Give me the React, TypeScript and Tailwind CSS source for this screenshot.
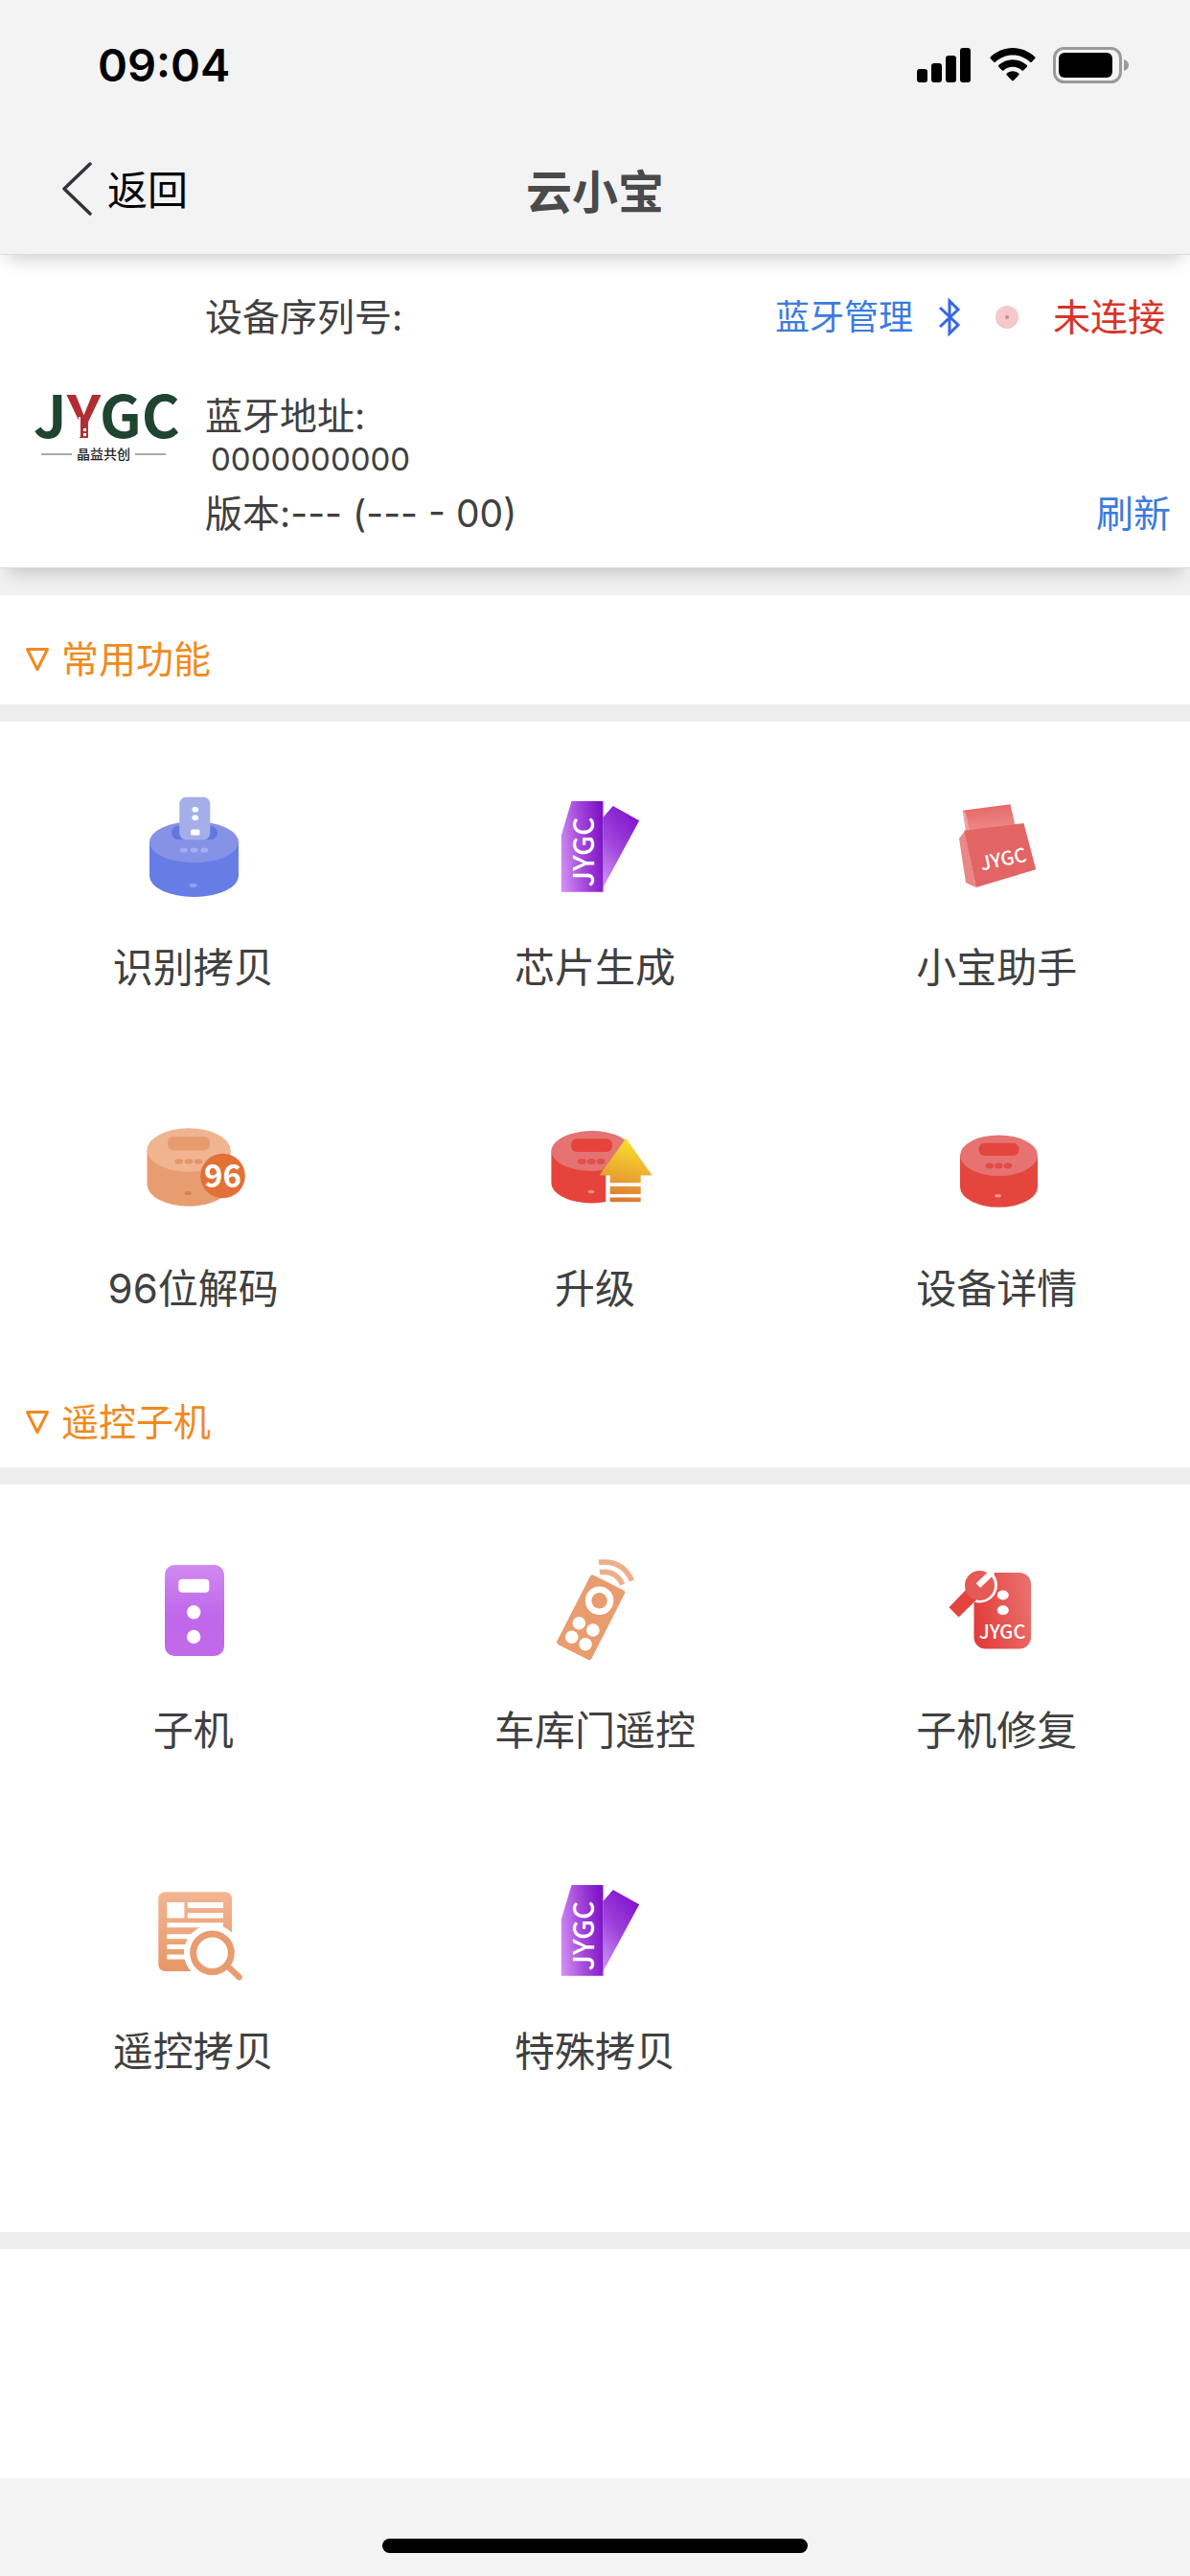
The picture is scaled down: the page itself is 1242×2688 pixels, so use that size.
import React from "react";

const MARK_FONT = '"Noto Sans CJK SC", "Noto Sans", sans-serif';

function SignalIcon() {
  return (
    <svg width="58" height="36" viewBox="0 0 58 36" aria-hidden="true">
      <rect x="0" y="22" width="11" height="14" rx="3" />
      <rect x="15" y="16" width="11" height="20" rx="3" />
      <rect x="30" y="8" width="11" height="28" rx="3" />
      <rect x="45" y="0" width="11" height="36" rx="3" />
    </svg>
  );
}

function WifiIcon() {
  return (
    <svg width="48" height="36" viewBox="0 0 48 36" aria-hidden="true">
      <path d="M24 0C33 0 41 3.600 47.300 9.400C47.800 9.900 47.800 10.500 47.300 11L43.700 14.700C43.200 15.200 42.600 15.200 42.100 14.700C37.200 10.200 30.900 7.500 24 7.500C17.100 7.500 10.800 10.200 5.900 14.700C5.400 15.200 4.800 15.200 4.300 14.700L0.700 11C0.200 10.500 0.200 9.900 0.700 9.400C7 3.600 15 0 24 0Z" />
      <path d="M24 12.300C29.700 12.300 34.900 14.500 38.800 18.100C39.300 18.600 39.300 19.200 38.800 19.700L35.100 23.400C34.700 23.800 34 23.800 33.500 23.400C31 21.200 27.700 19.800 24 19.800C20.300 19.800 17 21.200 14.500 23.400C14 23.800 13.300 23.800 12.900 23.400L9.200 19.700C8.700 19.200 8.700 18.600 9.200 18.100C13.100 14.500 18.300 12.300 24 12.300Z" />
      <path d="M24 24.300C26.500 24.300 28.700 25.200 30.400 26.700C30.900 27.200 30.900 27.800 30.400 28.300L24.900 33.900C24.400 34.400 23.600 34.400 23.100 33.900L17.600 28.300C17.100 27.800 17.100 27.200 17.600 26.700C19.300 25.200 21.500 24.300 24 24.300Z" />
    </svg>
  );
}

function BatteryIcon() {
  return (
    <svg width="80" height="38" viewBox="0 0 80 38" aria-hidden="true">
      <rect x="1.500" y="1.500" width="69" height="35" rx="10" fill="none" stroke="#9a9a9a" strokeWidth="3" />
      <rect x="6" y="6" width="56" height="26" rx="6" />
      <path d="M74 13C77 14 79 16.300 79 19C79 21.700 77 24 74 25Z" fill="#9a9a9a" />
    </svg>
  );
}

function BluetoothIcon() {
  return (
    <svg width="24" height="42" viewBox="0 0 24 42" fill="none" stroke="#3767e6" strokeWidth="3" strokeLinejoin="miter" aria-hidden="true">
      <path d="M2 11L21 29L12 38V4L21 13L2 31" />
    </svg>
  );
}

function BrandLogo() {
  return (
    <svg width="156" height="104" viewBox="0 0 156 104" role="img" aria-label="JYGC 晶益共创">
      <text x="1" y="75" fontFamily={MARK_FONT} fontWeight="700" fontSize="61" fill="#1f4430">
        J<tspan fill="#b02e31">Y</tspan>GC
      </text>
      <path d="M49 53V74" stroke="#ffffff" strokeWidth="2" />
      <path d="M53 65h3v3h-3zM53 70h3v3h-3z" fill="#ffffff" />
      <path d="M9 92H41M107 92H139" stroke="#555555" strokeWidth="1" />
      <text x="74" y="97" textAnchor="middle" fontFamily={MARK_FONT} fontWeight="500" fontSize="14" fill="#222222">
        晶益共创
      </text>
    </svg>
  );
}

function IconFrame({ children }: { children: React.ReactNode }) {
  return (
    <svg width="120" height="120" viewBox="0 0 120 120" aria-hidden="true">
      {children}
    </svg>
  );
}

function CopyIcon() {
  return (
    <IconFrame>
      <path d="M14 55V90A46.500 22 0 0 0 107 90V55Z" fill="#667de6" />
      <ellipse cx="60.500" cy="54.700" rx="46.500" ry="21.500" fill="#8592e6" />
      <rect x="37" y="38" width="48" height="14" rx="7" fill="#6277e0" />
      <rect x="45.300" y="7.700" width="32" height="44.500" rx="7" fill="#a4afea" />
      <rect x="58.500" y="18" width="6.500" height="5.500" rx="2.500" fill="#fff" />
      <rect x="58.500" y="26.500" width="6.500" height="5.500" rx="2.500" fill="#fff" />
      <rect x="57" y="41.500" width="9.500" height="6" rx="1.500" fill="#fff" />
      <g fill="#a3aef0">
        <ellipse cx="49.700" cy="63" rx="4" ry="2.600" />
        <ellipse cx="60.500" cy="63" rx="4" ry="2.600" />
        <ellipse cx="71.300" cy="63" rx="4" ry="2.600" />
      </g>
      <ellipse cx="59.500" cy="99.700" rx="4" ry="2" fill="#8fa1f2" />
    </IconFrame>
  );
}

function ChipIcon() {
  const id = React.useId();
  return (
    <IconFrame>
      <defs>
        <linearGradient id={id + "a"} x1="0" y1="0.700" x2="1" y2="0.500">
          <stop offset="0" stopColor="#cf8cf2" />
          <stop offset="0.500" stopColor="#a548da" />
          <stop offset="1" stopColor="#7f14c8" />
        </linearGradient>
        <linearGradient id={id + "b"} x1="0.600" y1="0" x2="0.100" y2="1">
          <stop offset="0" stopColor="#8216cc" />
          <stop offset="0.500" stopColor="#a044dc" />
          <stop offset="1" stopColor="#cf92f5" />
        </linearGradient>
      </defs>
      <polygon points="78.800,17 106.200,32.300 68.500,102 68.500,28.700" fill={"url(#" + id + "b)"} />
      <polygon points="35.500,12 68.500,12 68.500,106.700 24.800,106.700 24.800,47.700" fill={"url(#" + id + "a)"} />
      <text transform="translate(58.500 65) rotate(-90)" textAnchor="middle" fontFamily={MARK_FONT} fontWeight="500" fontSize="30" fill="#fff">
        JYGC
      </text>
    </IconFrame>
  );
}

function HelperIcon() {
  const id = React.useId();
  return (
    <IconFrame>
      <defs>
        <linearGradient id={id} x1="0" y1="0" x2="0.200" y2="1">
          <stop offset="0" stopColor="#e46262" />
          <stop offset="1" stopColor="#ee8a8a" />
        </linearGradient>
      </defs>
      <polygon points="24.800,21.700 74.500,15.300 79.500,37 29,44" fill={"url(#" + id + ")"} />
      <polygon points="24.800,21.700 28,24 32,43 28,44" fill="#f1a0a0" />
      <polygon points="21,51 27,43 38.800,102 28,97" fill="#ea8787" />
      <polygon points="26.500,42.700 88.500,35 101.200,83.300 38.800,102" fill="#e36464" />
      <text transform="translate(68.500 79.500) rotate(-12)" textAnchor="middle" fontFamily={MARK_FONT} fontWeight="500" fontSize="20" fill="#fff">
        JYGC
      </text>
    </IconFrame>
  );
}

function DecodeIcon() {
  return (
    <IconFrame>
      <path d="M11.500 41V77A43.500 22.800 0 0 0 98.500 77V41Z" fill="#e89d70" />
      <ellipse cx="55" cy="41" rx="43.500" ry="22.800" fill="#f0b491" />
      <rect x="33" y="27" width="44" height="14.500" rx="6" fill="#e79c70" />
      <g fill="#e5976a">
        <ellipse cx="44.700" cy="53" rx="4.400" ry="2.800" />
        <ellipse cx="55" cy="53" rx="4.400" ry="2.800" />
        <ellipse cx="65" cy="53" rx="4.400" ry="2.800" />
      </g>
      <ellipse cx="54.200" cy="86" rx="3.500" ry="2" fill="#d97f4f" />
      <circle cx="90.500" cy="68" r="23.300" fill="#e37036" />
      <text x="90.500" y="80" textAnchor="middle" fontFamily={MARK_FONT} fontWeight="700" fontSize="33" fill="#fff">
        96
      </text>
    </IconFrame>
  );
}

function UpgradeIcon() {
  const id = React.useId();
  return (
    <IconFrame>
      <defs>
        <linearGradient id={id} gradientUnits="userSpaceOnUse" x1="98" y1="30" x2="84" y2="96">
          <stop offset="0" stopColor="#f7e02c" />
          <stop offset="0.550" stopColor="#eaa931" />
          <stop offset="1" stopColor="#db7434" />
        </linearGradient>
      </defs>
      <path d="M14.400 42V75A42 21.300 0 0 0 71.500 95V42Z" fill="#e6443b" />
      <path d="M14.400 42A42 21 0 0 1 92 31L71.500 61.500A42 21 0 0 1 14.400 42Z" fill="#e47371" />
      <rect x="35" y="29.300" width="43" height="13.700" rx="6" fill="#e6443b" />
      <g fill="#e04f49">
        <ellipse cx="46.400" cy="53" rx="4.400" ry="2.900" />
        <ellipse cx="56.300" cy="53" rx="4.400" ry="2.900" />
        <ellipse cx="66.200" cy="53" rx="4.400" ry="2.900" />
      </g>
      <ellipse cx="56" cy="84.500" rx="3.500" ry="1.800" fill="#f08a80" />
      <path d="M71.500 67H112V98H71.500Z" fill="#fff" />
      <g fill={"url(#" + id + ")"}>
        <path d="M92.300 28.700L119.600 67.500H107.700V75.300H75.700V67.500H64.600Z" />
        <rect x="75.700" y="79" width="32" height="8" />
        <rect x="75.700" y="90.500" width="32" height="4.700" />
      </g>
    </IconFrame>
  );
}

function DeviceIcon() {
  return (
    <IconFrame>
      <path d="M22 46.700V79.500A40.500 21.300 0 0 0 103 79.500V46.700Z" fill="#e4463d" />
      <ellipse cx="62.500" cy="46.700" rx="40.500" ry="21.300" fill="#e67371" />
      <rect x="41.500" y="33.700" width="42" height="13.300" rx="6" fill="#e4463d" />
      <g fill="#e04c45">
        <ellipse cx="52.800" cy="57.500" rx="4.400" ry="2.900" />
        <ellipse cx="62.300" cy="57.500" rx="4.400" ry="2.900" />
        <ellipse cx="71.800" cy="57.500" rx="4.400" ry="2.900" />
      </g>
      <ellipse cx="61.500" cy="88.700" rx="3.500" ry="1.700" fill="#f3968c" />
    </IconFrame>
  );
}

function FobIcon() {
  const id = React.useId();
  return (
    <IconFrame>
      <defs>
        <linearGradient id={id} x1="0" y1="0" x2="0" y2="1">
          <stop offset="0" stopColor="#d08aef" />
          <stop offset="0.550" stopColor="#bf68eb" />
          <stop offset="1" stopColor="#c06ae8" />
        </linearGradient>
      </defs>
      <rect x="30" y="13" width="62" height="95" rx="10" fill={"url(#" + id + ")"} />
      <rect x="44.300" y="27.700" width="32" height="14" rx="4" fill="#fff" />
      <circle cx="60.200" cy="62.300" r="7.200" fill="#fff" />
      <circle cx="60.200" cy="88" r="7.200" fill="#fff" />
    </IconFrame>
  );
}

function GarageRemoteIcon() {
  return (
    <IconFrame>
      <rect x="35.500" y="27" width="40.400" height="81.400" rx="3" transform="rotate(27 55.700 67.700)" fill="#e99c6e" />
      <circle cx="64.600" cy="50.300" r="11.500" fill="none" stroke="#fff" strokeWidth="6.500" />
      <g fill="#fff">
        <circle cx="43.300" cy="73.700" r="6.800" />
        <circle cx="57.900" cy="81" r="6.800" />
        <circle cx="35.700" cy="88.300" r="6.800" />
        <circle cx="50" cy="95.700" r="6.800" />
      </g>
      <g fill="none" stroke="#eeae88" strokeWidth="5.500">
        <path d="M64 10.200Q89 7.500 98.500 29.500" />
        <path d="M65 20.500Q82 18 88.800 33.500" />
      </g>
    </IconFrame>
  );
}

function RepairIcon() {
  const id = React.useId();
  return (
    <IconFrame>
      <defs>
        <linearGradient id={id} x1="0" y1="0.600" x2="1" y2="0.300">
          <stop offset="0" stopColor="#e23d3b" />
          <stop offset="1" stopColor="#ea706c" />
        </linearGradient>
      </defs>
      <rect x="36.500" y="21" width="59.500" height="79.500" rx="12" fill={"url(#" + id + ")"} />
      <circle cx="42.500" cy="34" r="18.500" fill="#fff" />
      <path d="M28 39L10.500 57.300L20.500 67.500L39 49.500Z" fill="#e4433f" />
      <circle cx="42.500" cy="34.500" r="15.500" fill="#e55a57" />
      <path d="M41 34.500L56 20" stroke="#fff" strokeWidth="6.500" />
      <ellipse cx="66.800" cy="44.500" rx="6" ry="5" fill="#fff" />
      <ellipse cx="66.800" cy="60.300" rx="6" ry="5" fill="#fff" />
      <text x="66" y="90" textAnchor="middle" fontFamily={MARK_FONT} fontWeight="500" fontSize="20" fill="#fff">
        JYGC
      </text>
    </IconFrame>
  );
}

function SearchRecordIcon() {
  const id = React.useId();
  return (
    <IconFrame>
      <defs>
        <linearGradient id={id} x1="0" y1="0" x2="0" y2="1">
          <stop offset="0" stopColor="#f2b592" />
          <stop offset="1" stopColor="#e89767" />
        </linearGradient>
      </defs>
      <rect x="23.300" y="19.300" width="76.700" height="82.700" rx="7" fill={"url(#" + id + ")"} />
      <g fill="#fff">
        <rect x="32.400" y="30" width="18" height="16.500" />
        <rect x="53.800" y="30" width="37.200" height="6" />
        <rect x="53.800" y="41" width="37.200" height="5.500" />
        <rect x="32.400" y="51.300" width="58.600" height="5" />
        <rect x="32.400" y="63.200" width="30" height="5" />
        <rect x="32.400" y="74" width="20" height="5" />
        <rect x="32.400" y="84.500" width="20" height="5" />
        <circle cx="79.500" cy="82.700" r="29.500" />
      </g>
      <circle cx="79.500" cy="82.700" r="19.800" fill="none" stroke="#e99c6f" strokeWidth="7" />
      <path d="M97.500 98.500L107.500 108" stroke="#e99c6f" strokeWidth="6.500" strokeLinecap="round" />
    </IconFrame>
  );
}

type Feature = { label: string; Icon: () => React.JSX.Element };

const COMMON: Feature[] = [
  { label: "识别拷贝", Icon: CopyIcon },
  { label: "芯片生成", Icon: ChipIcon },
  { label: "小宝助手", Icon: HelperIcon },
  { label: "96位解码", Icon: DecodeIcon },
  { label: "升级", Icon: UpgradeIcon },
  { label: "设备详情", Icon: DeviceIcon },
];

const REMOTE: Feature[] = [
  { label: "子机", Icon: FobIcon },
  { label: "车库门遥控", Icon: GarageRemoteIcon },
  { label: "子机修复", Icon: RepairIcon },
  { label: "遥控拷贝", Icon: SearchRecordIcon },
  { label: "特殊拷贝", Icon: ChipIcon },
];

function Divider() {
  return <div className="h-[18px] shrink-0 bg-[#eeeeee]" />;
}

function SectionTitle({ children }: { children: string }) {
  return (
    <h2 className="flex items-center gap-3 bg-white px-[26px] pt-[37px] pb-[17px] text-[39px] leading-[60px] text-[#f08a1d]">
      <svg width="26" height="26" viewBox="0 0 26 26" fill="none" stroke="currentColor" strokeWidth="3" strokeLinejoin="round" aria-hidden="true">
        <path d="M2.500 2.500H23.500L13 23.500Z" />
      </svg>
      {children}
    </h2>
  );
}

function FeatureGrid({ items }: { items: Feature[] }) {
  return (
    <div className="grid grid-cols-3 gap-x-4 gap-y-12">
      {items.map(({ label, Icon }) => (
        <button key={label} type="button" className="flex flex-col items-center gap-9 pt-[71px] text-[42px] leading-[60px] text-[#404040]">
          <Icon />
          {label}
        </button>
      ))}
    </div>
  );
}

export default function App() {
  return (
    <div className="flex min-h-screen flex-col bg-white font-['Inter','Noto_Sans_CJK_SC',sans-serif] text-[#404040]">
      <header className="relative z-20 border-b border-[#dcdcdc] bg-[#f3f3f3] shadow-[0_12px_18px_-8px_rgba(0,0,0,0.2)]">
        <div className="flex h-[136px] items-center justify-between pr-[63px] pl-[102px] text-black">
          <time className="text-[47px] leading-[60px] font-semibold">09:04</time>
          <div className="flex items-center gap-[18px]">
            <SignalIcon />
            <WifiIcon />
            <BatteryIcon />
          </div>
        </div>
        <nav className="grid h-[129px] grid-cols-[1fr_auto_1fr] items-center px-[62px]">
          <button type="button" className="flex items-center gap-[14px] justify-self-start pb-1 text-[42px] leading-[60px] text-black">
            <svg width="36" height="60" viewBox="0 0 36 60" fill="none" stroke="#33333a" strokeWidth="3.500" strokeLinecap="round" strokeLinejoin="round" aria-hidden="true">
              <path d="M32 2L5 28L32 54" />
            </svg>
            返回
          </button>
          <h1 className="text-[48px] leading-[60px] font-bold text-[#4a4a4a]">云小宝</h1>
        </nav>
      </header>

      <section className="relative z-10 flex items-center border-b border-[#dcdcdc] bg-white pt-[35px] pr-5 pb-[26px] shadow-[0_12px_18px_-8px_rgba(0,0,0,0.2)]">
        <div className="w-[214px] shrink-0 pl-[34px]">
          <BrandLogo />
        </div>
        <div className="flex grow flex-col text-[39px] leading-[60px]">
          <div className="flex items-center justify-between">
            <span>设备序列号:</span>
            <div className="flex items-center">
              <button type="button" className="flex items-center gap-[26px] text-[36px] leading-[60px] text-[#3a7be0]">
                蓝牙管理
                <BluetoothIcon />
              </button>
              <span className="mr-9 ml-9 flex size-6 items-center justify-center rounded-full bg-[#f4c9c9]">
                <span className="size-1 rounded-full bg-[#d98585]" />
              </span>
              <span className="mr-1.5 text-[#d8342a]">未连接</span>
            </div>
          </div>
          <div className="mt-[43px]">蓝牙地址:</div>
          <div className="pl-1.5 text-[33px] leading-[30px]">0000000000</div>
          <div className="mt-3 flex items-center justify-between">
            <span>版本:--- (--- - 00)</span>
            <button type="button" className="text-[#3a7be0]">刷新</button>
          </div>
        </div>
      </section>
      <div className="h-7 shrink-0 bg-[#f1f1f1]" />

      <main className="flex grow flex-col">
        <SectionTitle>常用功能</SectionTitle>
        <Divider />
        <FeatureGrid items={COMMON} />
        <div className="h-[42px]" />
        <SectionTitle>遥控子机</SectionTitle>
        <Divider />
        <FeatureGrid items={REMOTE} />
        <div className="h-[158px]" />
        <Divider />
      </main>

      <footer className="flex h-[102px] shrink-0 items-end justify-center bg-[#f3f3f3] pb-6">
        <div className="h-[15px] w-[444px] rounded-full bg-black" />
      </footer>
    </div>
  );
}
